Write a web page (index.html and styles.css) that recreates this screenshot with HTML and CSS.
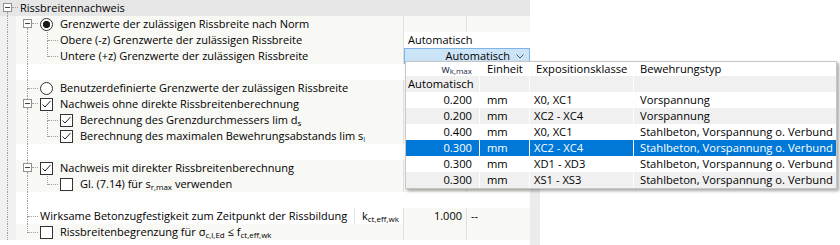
FILE: index.html
```html
<!DOCTYPE html>
<html lang="de">
<head>
<meta charset="utf-8">
<title>Rissbreitennachweis</title>
<link rel="stylesheet" href="styles.css">
</head>
<body>
<div class="page">
  <div class="grid">
    <div class="row head">
      <span class="bx nu"><span class="u"></span><span class="m"><i class="box"></i><i class="h"></i></span><span class="d"></span></span>
      <span class="name">Rissbreitennachweis</span>
    </div>
    <div class="row">
      <span class="t gut"><i></i><i></i><i></i><i></i></span>
      <span class="bx nu"><span class="u"></span><span class="m"><i class="box"></i><i class="h"></i></span><span class="d"></span></span>
      <span class="gl"><i class="radio on"></i></span>
      <span class="name">Grenzwerte der zulässigen Rissbreite nach Norm</span>
      <span class="val"></span><span class="unit"></span>
    </div>
    <div class="row">
      <span class="t gut"><i></i><i></i><i></i><i></i></span>
      <span class="t v"><i></i><i></i><i></i><i></i></span>
      <span class="t tee"><i></i><i></i><i></i><i></i></span>
      <span class="name">Obere (-z) Grenzwerte der zulässigen Rissbreite</span>
      <span class="vv">Automatisch</span>
    </div>
    <div class="row">
      <span class="t gut"><i></i><i></i><i></i><i></i></span>
      <span class="t v"><i></i><i></i><i></i><i></i></span>
      <span class="t end"><i></i><i></i><i></i><i></i></span>
      <span class="name">Untere (+z) Grenzwerte der zulässigen Rissbreite</span>
      <span class="combo"><span>Automatisch</span><svg class="chev" width="8" height="5" viewBox="0 0 8 5"><path d="M0.5 0.5 L4 4 L7.5 0.5" fill="none" stroke="#555" stroke-width="1"/></svg></span>
    </div>
    <div class="row w">
      <span class="t gut"><i></i><i></i><i></i><i></i></span>
      <span class="t v"><i></i><i></i><i></i><i></i></span>
    </div>
    <div class="row">
      <span class="t gut"><i></i><i></i><i></i><i></i></span>
      <span class="t tee"><i></i><i></i><i></i><i></i></span>
      <span class="gl"><i class="radio"></i></span>
      <span class="name">Benutzerdefinierte Grenzwerte der zulässigen Rissbreite</span>
      <span class="val"></span><span class="unit"></span>
    </div>
    <div class="row">
      <span class="t gut"><i></i><i></i><i></i><i></i></span>
      <span class="bx"><span class="u"></span><span class="m"><i class="box"></i><i class="h"></i></span><span class="d"></span></span>
      <span class="gl"><i class="chk on"><svg width="11" height="11" viewBox="0 0 11 11"><path d="M1.5 5.5 L4 8 L9.5 2" fill="none" stroke="#222" stroke-width="1"/></svg></i></span>
      <span class="name">Nachweis ohne direkte Rissbreitenberechnung</span>
      <span class="val"></span><span class="unit"></span>
    </div>
    <div class="row">
      <span class="t gut"><i></i><i></i><i></i><i></i></span>
      <span class="t v"><i></i><i></i><i></i><i></i></span>
      <span class="t tee"><i></i><i></i><i></i><i></i></span>
      <span class="gl"><i class="chk on"><svg width="11" height="11" viewBox="0 0 11 11"><path d="M1.5 5.5 L4 8 L9.5 2" fill="none" stroke="#222" stroke-width="1"/></svg></i></span>
      <span class="name">Berechnung des Grenzdurchmessers lim d<sub>s</sub></span>
      <span class="val"></span><span class="unit"></span>
    </div>
    <div class="row">
      <span class="t gut"><i></i><i></i><i></i><i></i></span>
      <span class="t v"><i></i><i></i><i></i><i></i></span>
      <span class="t end"><i></i><i></i><i></i><i></i></span>
      <span class="gl"><i class="chk on"><svg width="11" height="11" viewBox="0 0 11 11"><path d="M1.5 5.5 L4 8 L9.5 2" fill="none" stroke="#222" stroke-width="1"/></svg></i></span>
      <span class="name">Berechnung des maximalen Bewehrungsabstands lim s<sub class="bl">l</sub></span>
      <span class="val"></span><span class="unit"></span>
    </div>
    <div class="row w">
      <span class="t gut"><i></i><i></i><i></i><i></i></span>
      <span class="t v"><i></i><i></i><i></i><i></i></span>
    </div>
    <div class="row">
      <span class="t gut"><i></i><i></i><i></i><i></i></span>
      <span class="bx"><span class="u"></span><span class="m"><i class="box"></i><i class="h"></i></span><span class="d"></span></span>
      <span class="gl"><i class="chk on"><svg width="11" height="11" viewBox="0 0 11 11"><path d="M1.5 5.5 L4 8 L9.5 2" fill="none" stroke="#222" stroke-width="1"/></svg></i></span>
      <span class="name">Nachweis mit direkter Rissbreitenberechnung</span>
      <span class="val"></span><span class="unit"></span>
    </div>
    <div class="row">
      <span class="t gut"><i></i><i></i><i></i><i></i></span>
      <span class="t v"><i></i><i></i><i></i><i></i></span>
      <span class="t end"><i></i><i></i><i></i><i></i></span>
      <span class="gl"><i class="chk"></i></span>
      <span class="name">Gl. (7.14) für s<sub>r,max</sub> verwenden</span>
      <span class="val"></span><span class="unit"></span>
    </div>
    <div class="row w">
      <span class="t gut"><i></i><i></i><i></i><i></i></span>
      <span class="t v"><i></i><i></i><i></i><i></i></span>
    </div>
    <div class="row w">
      <span class="t gut"><i></i><i></i><i></i><i></i></span>
      <span class="t tee"><i></i><i></i><i></i><i></i></span>
      <span class="name">Wirksame Betonzugfestigkeit zum Zeitpunkt der Rissbildung</span>
      <span class="sym">k<sub>ct,eff,wk</sub></span>
      <span class="val off">1.000</span><span class="unit off">--</span>
    </div>
    <div class="row">
      <span class="t gut"><i></i><i></i><i></i><i></i></span>
      <span class="t end"><i></i><i></i><i></i><i></i></span>
      <span class="gl"><i class="chk"></i></span>
      <span class="name">Rissbreitenbegrenzung für σ<sub>c,l,Ed</sub> ≤ f<sub>ct,eff,wk</sub></span>
      <span class="val"></span><span class="unit"></span>
    </div>
  </div>
  <div class="side"><span class="sp"></span><span class="bar"></span></div>

  <div class="popup">
    <div class="pr ph"><span class="c1 hw">w<sub>k,max</sub></span><span class="c2">Einheit</span><span class="c3 hp">Expositionsklasse</span><span class="c4">Bewehrungstyp</span></div>
    <div class="pr g"><span class="c1 left">Automatisch</span><span class="c2"></span><span class="c3"></span><span class="c4"></span></div>
    <div class="pr"><span class="c1">0.200</span><span class="c2">mm</span><span class="c3">X0, XC1</span><span class="c4">Vorspannung</span></div>
    <div class="pr g"><span class="c1">0.200</span><span class="c2">mm</span><span class="c3">XC2 - XC4</span><span class="c4">Vorspannung</span></div>
    <div class="pr"><span class="c1">0.400</span><span class="c2">mm</span><span class="c3">X0, XC1</span><span class="c4">Stahlbeton, Vorspannung o. Verbund</span></div>
    <div class="pr sel"><span class="c1">0.300</span><span class="c2">mm</span><span class="c3">XC2 - XC4</span><span class="c4">Stahlbeton, Vorspannung o. Verbund</span></div>
    <div class="pr"><span class="c1">0.300</span><span class="c2">mm</span><span class="c3">XD1 - XD3</span><span class="c4">Stahlbeton, Vorspannung o. Verbund</span></div>
    <div class="pr g"><span class="c1">0.300</span><span class="c2">mm</span><span class="c3">XS1 - XS3</span><span class="c4">Stahlbeton, Vorspannung o. Verbund</span></div>
  </div>
</div>
</body>
</html>
```

FILE: styles.css
```css
* { box-sizing: border-box; margin: 0; padding: 0; }
html, body { margin: 0; background: #fff; }
body {
  font-family: "Open Sans", "Noto Sans", sans-serif;
  font-size: 11px;
  color: #000;
}
i { font-style: normal; }

.page {
  position: relative;
  width: 840px;
  height: 245px;
  overflow: hidden;
  display: flex;
}

.grid { width: 530px; flex: none; }

.side {
  width: 10px;
  flex: none;
  display: flex;
  flex-direction: column;
}
.side .sp { height: 64px; }
.side .bar { flex: 1; background: #ebebeb; }

.row {
  display: flex;
  height: 16px;
  line-height: 16px;
  background: #f8f8f4;
}
.row.head { background: #e6e6e6; }
.row.w { background: #fff; }

/* tree connector cells */
.t {
  width: 20px;
  height: 16px;
  flex: none;
  display: grid;
  grid-template-columns: 8px 12px;
  grid-template-rows: 9px 7px;
}
.t i { display: block; }
.t.gut { background: linear-gradient(to right, #f0f0f0 16px, transparent 16px); }
.t.gut i:nth-child(1), .t.gut i:nth-child(3),
.t.v i:nth-child(1), .t.v i:nth-child(3),
.t.tee i:nth-child(1), .t.tee i:nth-child(3),
.t.end i:nth-child(1) { border-right: 1px dotted #a0a0a0; }
.t.tee i:nth-child(2), .t.end i:nth-child(2) {
  border-bottom: 1px dotted #a0a0a0;
  margin-right: 2px;
}

.bx {
  width: 20px;
  height: 16px;
  flex: none;
  display: flex;
  flex-direction: column;
}
.bx .u { height: 3px; width: 8px; border-right: 1px dotted #a0a0a0; }
.bx.nu .u { border-right: 0; }
.bx .d { height: 4px; width: 8px; border-right: 1px dotted #a0a0a0; }
.bx .m { height: 9px; display: flex; align-items: center; }
.bx .box {
  display: block;
  margin-left: 3px;
  width: 9px;
  height: 9px;
  border: 1px solid #919191;
  background: linear-gradient(#444, #444) center / 5px 1px no-repeat, #fff;
}
.bx .h { display: block; width: 6px; height: 0; border-top: 1px dotted #a0a0a0; }

.gl {
  width: 20px;
  flex: none;
  display: flex;
  align-items: center;
}
.radio {
  display: block;
  width: 13px;
  height: 13px;
  border: 1px solid #333;
  border-radius: 50%;
  background: #fff;
}
.radio.on { background: radial-gradient(circle, #1a1a1a 0 3.4px, #fff 3.9px); }
.chk {
  display: block;
  width: 13px;
  height: 13px;
  border: 1px solid #333;
  background: #fff;
}
.chk svg { display: block; }

.name {
  flex: 1;
  min-width: 0;
  white-space: nowrap;
  overflow: hidden;
  border-right: 1px solid #e0e0e0;
}
.head .name { border-right: 0; }

sub {
  font-size: 8px;
  vertical-align: -2px;
  line-height: 0;
}
.bl { color: #2d5a9e; }

.sym {
  width: 50px;
  flex: none;
  border-left: 1px solid #e0e0e0;
  border-right: 1px solid #e0e0e0;
  padding-left: 7px;
  white-space: nowrap;
  overflow: hidden;
}
.row:has(.sym) .name { border-right: 0; }

.val {
  width: 63px;
  flex: none;
  border-right: 1px solid #e0e0e0;
  text-align: right;
  padding-right: 4px;
}
.unit { width: 63px; flex: none; padding-left: 4px; }
.val.off, .unit.off { background: #f8f8f4; }

.vv {
  width: 126px;
  flex: none;
  background: #fff;
  padding-left: 4px;
}
.combo {
  width: 126px;
  flex: none;
  background: #cce4f7;
  border: 1px solid #7eb4ea;
  display: flex;
  justify-content: flex-end;
  align-items: center;
  gap: 6px;
  padding-right: 5px;
  line-height: 14px;
}
.chev { display: block; }

/* dropdown popup */
.popup {
  position: absolute;
  left: 405px;
  top: 61px;
  width: 432px;
  border: 1px solid #c6c6c6;
  background: #fff;
  box-shadow: 2px 2px 3px rgba(0, 0, 0, 0.35);
  font-size: 11.2px;
}
.pr {
  display: flex;
  height: 16px;
  line-height: 16px;
  white-space: nowrap;
}
.pr.ph { height: 14px; line-height: 14px; }
.pr.g { background: #f0f0f0; }
.pr.sel { background: #0078d7; color: #fff; }
.pr span { display: block; overflow: hidden; }
.c1 { width: 74px; border-right: 1px solid #fff; text-align: right; padding-right: 7px; }
.c1.left { text-align: left; padding-left: 2px; padding-right: 0; }
.c2 { width: 50px; border-right: 1px solid #fff; padding-left: 7px; }
.c3 { width: 104px; border-right: 1px solid #fff; padding-left: 4px; }
.c3.hp { padding-left: 6px; }
.c4 { width: 202px; padding-left: 6px; }
.hw { color: #1e2a4a; font-size: 10.5px; }
.hw sub { font-size: 8px; vertical-align: -1px; }
```
